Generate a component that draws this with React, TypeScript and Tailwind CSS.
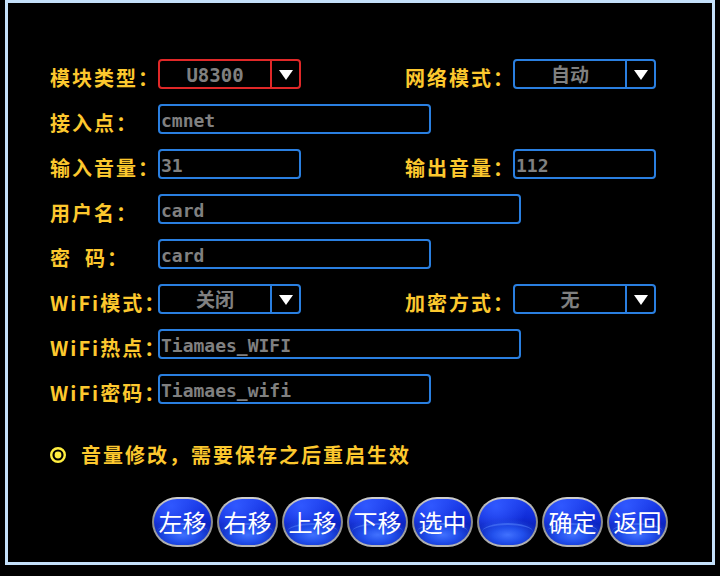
import React from "react";

const LABEL_FONT = { fontFamily: '"Noto Sans CJK SC", "Noto Sans", sans-serif' };
const VALUE_FONT = { fontFamily: '"DejaVu Sans Mono", "Noto Sans CJK SC", monospace' };

function Label({ children }: { children: React.ReactNode }) {
  return (
    <div
      className="w-[108px] mt-[8px] text-[20px] leading-[24px] font-bold tracking-[2px] text-[#fcc82e] whitespace-nowrap"
      style={LABEL_FONT}
    >
      {children}
    </div>
  );
}

function Input({ value, w }: { value: string; w: string }) {
  return (
    <div
      className={`${w} h-[30px] rounded-[4px] border-2 border-[#2a7fe0] flex items-center pl-[1px] pt-[2px] text-[18px] font-bold text-[#808080] whitespace-nowrap`}
      style={VALUE_FONT}
    >
      {value}
    </div>
  );
}

function Dropdown({ value, red }: { value: string; red?: boolean }) {
  const border = red ? "border-[#e02828]" : "border-[#2a7fe0]";
  return (
    <div className={`w-[143px] h-[30px] rounded-[4px] border-2 ${border} flex`}>
      <div
        className={`w-[112px] h-full border-r-2 ${border} flex items-center justify-center pt-[2px] text-[19px] font-bold text-[#808080]`}
        style={VALUE_FONT}
      >
        {value}
      </div>
      <div className="flex-1 flex items-center justify-center">
        <svg width="14" height="11" viewBox="0 0 14 11">
          <polygon points="0,1 14,1 7,11" fill="#ffffff" />
        </svg>
      </div>
    </div>
  );
}

function Row({ children }: { children: React.ReactNode }) {
  return <div className="flex h-[30px] items-center">{children}</div>;
}

function GlossButton({ text }: { text: string }) {
  return (
    <div className="w-[61px] h-[50px] rounded-full p-[2px] bg-[linear-gradient(180deg,#d0d0d0_0%,#8a8a8a_50%,#b8b8b8_100%)]">
      <div className="relative w-full h-full rounded-full overflow-hidden bg-[radial-gradient(ellipse_60%_35%_at_50%_78%,#4272ff_0%,#2250ec_45%,transparent_100%),radial-gradient(ellipse_at_30%_15%,#3058ff_0%,transparent_55%),linear-gradient(180deg,#1e40ee_0%,#102cd8_40%,#081ca8_72%,#0a26c0_100%)] flex items-center justify-center">
        <div className="absolute left-[3px] right-[3px] top-[24px] h-[18px] rounded-[50%] border-t-2 border-[#4f7cf8] opacity-60" />
        <span
          className="relative text-[24px] leading-none text-white"
          style={{ fontFamily: '"Noto Sans CJK SC", sans-serif' }}
        >
          {text}
        </span>
      </div>
    </div>
  );
}

export default function App() {
  const buttons = ["左移", "右移", "上移", "下移", "选中", "", "确定", "返回"];
  return (
    <div className="w-[720px] h-[576px] bg-black">
      <div className="ml-[5px] w-[710px] h-[565px] border-[3px] border-[#c4e0fa] bg-black pt-[56px] pl-[42px]">
        <div className="flex flex-col gap-[15px]">
          <Row>
            <div className="w-[355px] flex items-center">
              <Label>模块类型：</Label>
              <Dropdown value="U8300" red />
            </div>
            <Label>网络模式：</Label>
            <Dropdown value="自动" />
          </Row>
          <Row>
            <Label>接入点：</Label>
            <Input value="cmnet" w="w-[273px]" />
          </Row>
          <Row>
            <div className="w-[355px] flex items-center">
              <Label>输入音量：</Label>
              <Input value="31" w="w-[143px]" />
            </div>
            <Label>输出音量：</Label>
            <Input value="112" w="w-[143px]" />
          </Row>
          <Row>
            <Label>用户名：</Label>
            <Input value="card" w="w-[363px]" />
          </Row>
          <Row>
            <Label>
              密&nbsp;&nbsp;码：
            </Label>
            <Input value="card" w="w-[273px]" />
          </Row>
          <Row>
            <div className="w-[355px] flex items-center">
              <Label>WiFi模式：</Label>
              <Dropdown value="关闭" />
            </div>
            <Label>加密方式：</Label>
            <Dropdown value="无" />
          </Row>
          <Row>
            <Label>WiFi热点：</Label>
            <Input value="Tiamaes_WIFI" w="w-[363px]" />
          </Row>
          <Row>
            <Label>WiFi密码：</Label>
            <Input value="Tiamaes_wifi" w="w-[273px]" />
          </Row>
        </div>

        <div className="mt-[41px] h-[20px] flex items-center gap-[15px]">
          <svg width="16" height="16" viewBox="0 0 16 16">
            <circle cx="8" cy="8" r="6.8" fill="none" stroke="#ffee40" strokeWidth="2.4" />
            <circle cx="8" cy="8" r="3.4" fill="#ffee40" />
          </svg>
          <span
            className="text-[20px] leading-[20px] font-bold text-[#fcc82e] tracking-[2px] whitespace-nowrap"
            style={LABEL_FONT}
          >
            音量修改，需要保存之后重启生效
          </span>
        </div>

        <div className="mt-[32px] ml-[102px] flex gap-[4px]">
          {buttons.map((b, i) => (
            <GlossButton key={i} text={b} />
          ))}
        </div>
      </div>
    </div>
  );
}
